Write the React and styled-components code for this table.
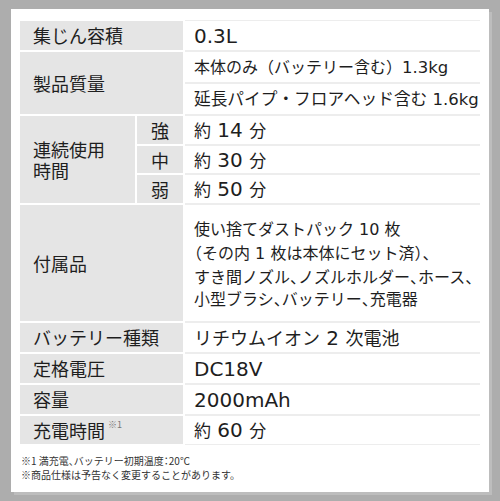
import React from "react";
import styled, { createGlobalStyle } from "styled-components";

const Global = createGlobalStyle`
  html, body { margin: 0; padding: 0; }
  body {
    background: #adadad;
    font-family: "Noto Sans CJK JP", "Noto Sans", sans-serif;
    color: #1e1e1e;
    width: 500px;
    height: 501px;
    overflow: hidden;
  }
`;

const Page = styled.div`
  padding: 9px 0 0 11px;
`;

const Card = styled.div`
  width: 478px;
  height: 483px;
  box-sizing: border-box;
  background: #fff;
  padding: 12px 9px 0 9px;
  box-shadow: 3px 3px 0 #bdbdbd;
`;

const Table = styled.div`
  display: grid;
  grid-template-columns: 115px 46px 1fr;
  grid-template-rows: 29px 30px 30px 28px 27px 28px 116px 29px 29px 29px 28px;
  gap: 2px;
`;

const Label = styled.div`
  grid-column: ${(p) => (p.$wide ? "1 / span 2" : "1")};
  grid-row: span ${(p) => p.$rows || 1};
  background: #e5e5e5;
  display: flex;
  align-items: center;
  padding-left: 13px;
  font-size: 18px;
  line-height: 21px;
  white-space: nowrap;
`;

const Sub = styled.div`
  grid-column: 2;
  background: #e5e5e5;
  display: flex;
  align-items: center;
  justify-content: center;
  font-size: 18px;
`;

const ValueCell = styled.div`
  grid-column: 3;
  display: flex;
  align-items: center;
  padding-left: 9px;
  font-size: ${(p) => p.$size || 17}px;
  line-height: 22px;
  white-space: nowrap;
  box-shadow: 0 1px 0 #ededed, 0 -1px 0 #ededed;
`;

const Content = styled.span`
  display: block;
`;

function Value({ size, children }) {
  return (
    <ValueCell $size={size}>
      <Content>{children}</Content>
    </ValueCell>
  );
}

const Lat = styled.span`
  font-family: "DejaVu Sans", "Noto Sans", sans-serif;
  font-size: ${(p) => p.$size || 20}px;
`;

const Line = styled.span`
  display: block;
  white-space: nowrap;
`;

const Half = styled.span`
  font-feature-settings: "halt" 1;
`;

const Note = styled.span`
  font-size: 9px;
  color: #777;
  margin-left: 3px;
  align-self: flex-start;
  margin-top: 4px;
  line-height: 10px;
`;

const Footnotes = styled.div`
  margin-top: 10px;
  padding-left: 1px;
  font-size: 10px;
  line-height: 13.5px;
  color: #333;
`;

export default function App() {
  return (
    <>
      <Global />
      <Page>
        <Card>
          <Table>
            <Label $wide>集じん容積</Label>
            <Value>
              <Lat>0.3L</Lat>
            </Value>

            <Label $wide $rows={2}>製品質量</Label>
            <Value size={16}>
              本体のみ（バッテリー含む）<Lat $size={16.5}>1.3kg</Lat>
            </Value>
            <Value size={16.7}>
              延長パイプ・フロアヘッド含む<Lat $size={16.5}> 1.6kg</Lat>
            </Value>

            <Label $rows={3}>
              連続使用
              <br />
              時間
            </Label>
            <Sub>強</Sub>
            <Value>
              約<Lat> 14 </Lat>分
            </Value>
            <Sub>中</Sub>
            <Value>
              約<Lat> 30 </Lat>分
            </Value>
            <Sub>弱</Sub>
            <Value>
              約<Lat> 50 </Lat>分
            </Value>

            <Label $wide>付属品</Label>
            <Value size={16}>
              <Line>
                使い捨てダストパック<Lat $size={16}> 10 </Lat>枚
              </Line>
              <Line>
                <Half>（</Half>その内<Lat $size={16}> 1 </Lat>枚は本体にセット済）<Half>、</Half>
              </Line>
              <Line>
                すき間ノズル<Half>、</Half>ノズルホルダー<Half>、</Half>ホース<Half>、</Half>
              </Line>
              <Line>
                小型ブラシ<Half>、</Half>バッテリー<Half>、</Half>充電器
              </Line>
            </Value>

            <Label $wide>バッテリー種類</Label>
            <Value size={18}>
              リチウムイオン<Lat> 2 </Lat>次電池
            </Value>

            <Label $wide>定格電圧</Label>
            <Value>
              <Lat>DC18V</Lat>
            </Value>

            <Label $wide>容量</Label>
            <Value>
              <Lat>2000mAh</Lat>
            </Value>

            <Label $wide>
              充電時間<Note>※1</Note>
            </Label>
            <Value>
              約<Lat> 60 </Lat>分
            </Value>
          </Table>
          <Footnotes>
            <div>
              ※1 満充電<Half>、</Half>バッテリー初期温度<Half>：</Half>20℃
            </div>
            <div>※商品仕様は予告なく変更することがあります。</div>
          </Footnotes>
        </Card>
      </Page>
    </>
  );
}
